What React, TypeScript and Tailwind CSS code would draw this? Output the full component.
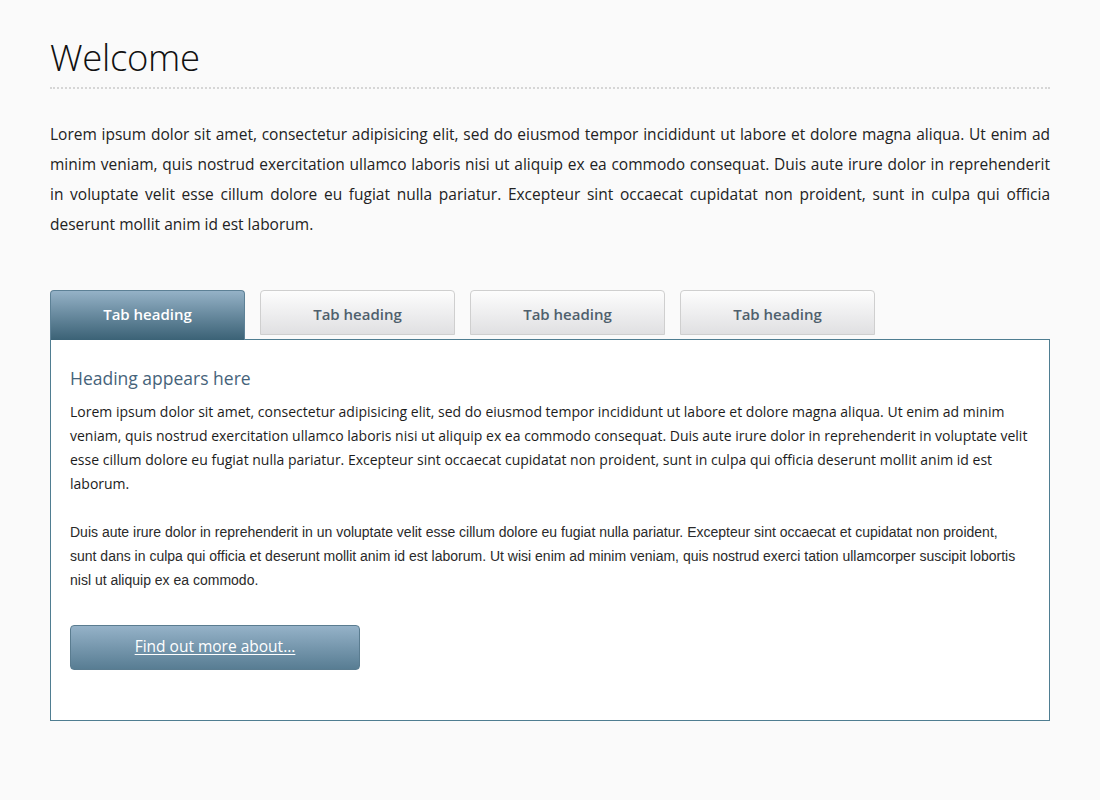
const TABS = ["Tab heading", "Tab heading", "Tab heading", "Tab heading"];

export default function App() {
  return (
    <div className="min-h-[800px] bg-[#fafafa] px-[50px] pt-[34px] font-['Open_Sans',sans-serif] text-[#1f1f1f]">
      {/* Page title */}
      <h1 className="text-[36.5px] font-light leading-[46px] tracking-[-0.3px] text-[#111]">Welcome</h1>
      <div className="mt-[7px] border-b-2 border-dotted border-[#d6d6d6]" />

      <p className="mt-[30px] text-justify text-[15.5px] leading-[30px] text-[#222]">
        Lorem ipsum dolor sit amet, consectetur adipisicing elit, sed do eiusmod tempor incididunt ut labore et dolore
        magna aliqua. Ut enim ad minim veniam, quis nostrud exercitation ullamco laboris nisi ut aliquip ex ea commodo
        consequat. Duis aute irure dolor in reprehenderit in voluptate velit esse cillum dolore eu fugiat nulla pariatur.
        Excepteur sint occaecat cupidatat non proident, sunt in culpa qui officia deserunt mollit anim id est laborum.
      </p>

      {/* Tabs */}
      <div className="mt-[51px] flex items-start gap-[15px]">
        {TABS.map((label, i) =>
          i === 0 ? (
            <div
              key={i}
              className="-mb-px flex h-[50px] w-[195px] items-center justify-center rounded-t-[4px] border border-b-0 border-[#5d8196] bg-gradient-to-b from-[#95b2c7] to-[#3b6276] pb-[2px] text-[15px] font-semibold text-white"
            >
              {label}
            </div>
          ) : (
            <div
              key={i}
              className="flex h-[45px] w-[195px] items-center justify-center rounded-t-[4px] border border-[#cfcfcf] bg-gradient-to-b from-[#fdfdfd] to-[#e0e0e2] pt-[3px] text-[15px] font-semibold text-[#4f606d]"
            >
              {label}
            </div>
          )
        )}
      </div>

      {/* Panel */}
      <div className="h-[382px] border border-[#4f7d91] bg-white px-[19px] pt-[25px]">
        <h2 className="text-[17.5px] leading-[26px] text-[#46637a]">Heading appears here</h2>
        <p className="mt-[9px] text-[14px] leading-[24px] text-[#1c1c1c]">
          Lorem ipsum dolor sit amet, consectetur adipisicing elit, sed do eiusmod tempor incididunt ut labore et dolore
          magna aliqua. Ut enim ad minim veniam, quis nostrud exercitation ullamco laboris nisi ut aliquip ex ea commodo
          consequat. Duis aute irure dolor in reprehenderit in voluptate velit esse cillum dolore eu fugiat nulla
          pariatur. Excepteur sint occaecat cupidatat non proident, sunt in culpa qui officia deserunt mollit anim id est
          laborum.
        </p>
        <p className="mt-[24px] mr-[12px] font-['Liberation_Sans',Arial,sans-serif] text-[14px] leading-[24px] text-[#2a2a2a]">
          Duis aute irure dolor in reprehenderit in un voluptate velit esse cillum dolore eu fugiat nulla pariatur.
          Excepteur sint occaecat et cupidatat non proident, sunt dans in culpa qui officia et deserunt mollit anim id est
          laborum. Ut wisi enim ad minim veniam, quis nostrud exerci tation ullamcorper suscipit lobortis nisl ut aliquip
          ex ea commodo.
        </p>
        <a
          href="#"
          className="mt-[33px] flex h-[45px] w-[290px] items-center justify-center rounded-[4px] border border-[#5a7c90] bg-gradient-to-b from-[#95b2c8] to-[#587d93] pb-[2px] text-[15.5px] text-white underline underline-offset-2"
        >
          Find out more about...
        </a>
      </div>
    </div>
  );
}
